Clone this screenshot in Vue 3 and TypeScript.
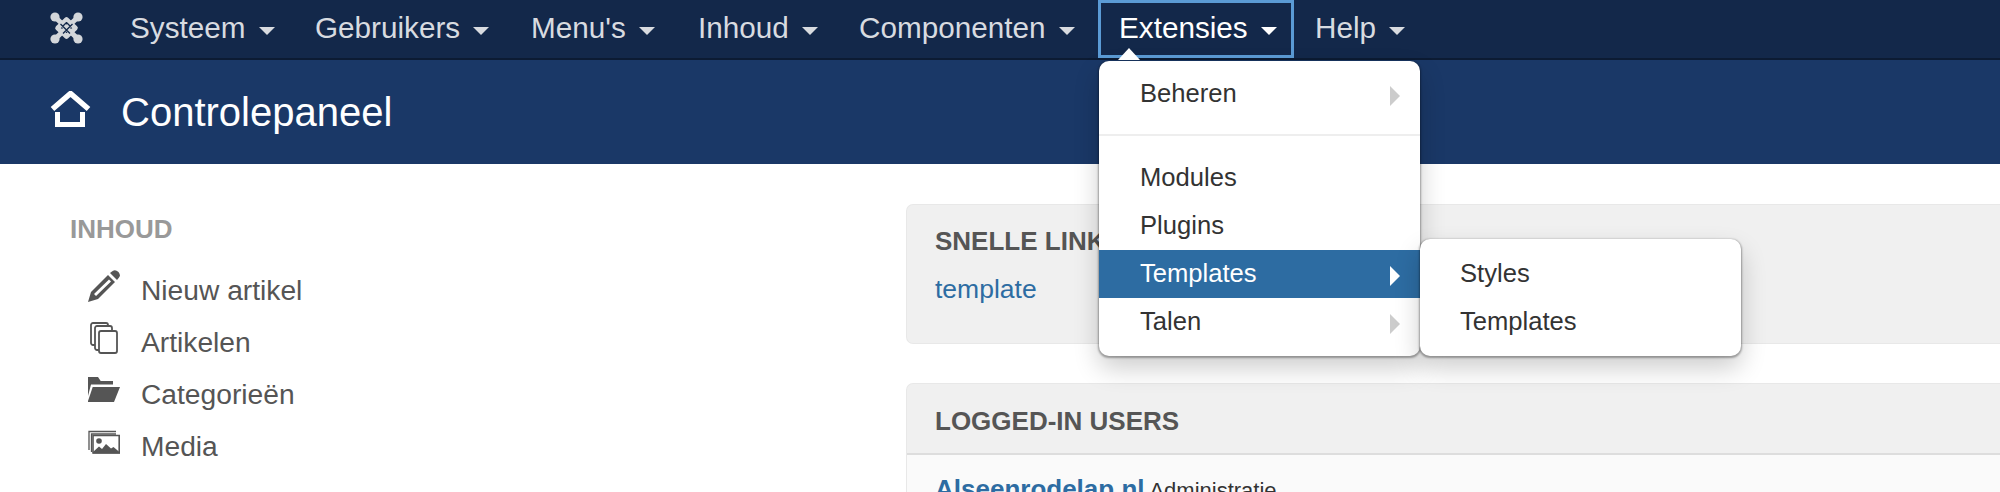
<script setup lang="ts">
const navItems = [
  { label: 'Systeem', width: 185, active: false },
  { label: 'Gebruikers', width: 216, active: false },
  { label: "Menu's", width: 167, active: false },
  { label: 'Inhoud', width: 161, active: false },
  { label: 'Componenten', width: 260, active: false },
  { label: 'Extensies', width: 196, active: true },
  { label: 'Help', width: 100, active: false },
]
</script>

<template>
  <div class="page">
    <nav class="navbar">
      <svg class="logo" viewBox="0 0 33 32" width="33" height="32">
        <g fill="none" stroke="#d3d6da" stroke-linejoin="round">
          <path d="M5 5 L28 27 M28 5 L5 27" stroke-width="5" />
          <path d="M16.5 7.5 L25.5 16 L16.5 24.5 L7.5 16 Z" stroke-width="4.6" />
        </g>
        <path d="M10.5 12 L20 21.5 M22.5 12 L13 21.5 M16.5 10.5 L13 14 M16.5 10.5 L20 14" stroke="#13284a" stroke-width="1.3" fill="none" />
        <circle cx="5" cy="5" r="4.6" fill="#d3d6da" />
        <circle cx="28" cy="5" r="4.6" fill="#d3d6da" />
        <circle cx="5" cy="27" r="4.6" fill="#d3d6da" />
        <circle cx="28" cy="27" r="4.6" fill="#d3d6da" />
      </svg>
      <ul class="nav-list">
        <li
          v-for="item in navItems"
          :key="item.label"
          class="nav-item"
          :class="{ active: item.active }"
          :style="{ width: item.width + 'px' }"
        >
          <span>{{ item.label }}</span><i class="caret"></i>
          <template v-if="item.active">
            <i class="pointer"></i>
            <div class="dropdown">
              <div class="dd-item">Beheren<i class="arrow"></i></div>
              <div class="dd-divider"></div>
              <div class="dd-item">Modules</div>
              <div class="dd-item">Plugins</div>
              <div class="dd-item selected">Templates<i class="arrow"></i>
                <div class="dropdown submenu">
                  <div class="dd-item">Styles</div>
                  <div class="dd-item">Templates</div>
                </div>
              </div>
              <div class="dd-item">Talen<i class="arrow"></i></div>
            </div>
          </template>
        </li>
      </ul>
    </nav>

    <header class="subhead">
      <svg class="home" viewBox="0 0 41 37" width="41" height="37">
        <path d="M2.5 18 L20.5 2.5 L38.5 18" fill="none" stroke="#fff" stroke-width="5.5" />
        <path d="M5 21 H10 V31 H30 V21 H35 V36 H5 Z" fill="#fff" />
      </svg>
      <h1>Controlepaneel</h1>
    </header>

    <main class="content">
      <aside class="sidebar">
        <h2>INHOUD</h2>
        <ul class="side-list">
          <li>
            <svg viewBox="0 0 32 32" width="32" height="32"><path d="M0 32 L3 22 L20 5 L27 12 L10 29 Z M6 24 L8 26 L23 11.5 L21 9.5 Z" fill="#555" fill-rule="evenodd"/><path d="M22 3 L25 0.8 Q27.5 -0.6 30.5 2 Q33 5 31 7.5 L29 10 Z" fill="#555"/></svg>
            Nieuw artikel
          </li>
          <li>
            <svg viewBox="0 0 32 32" width="32" height="32"><g fill="#fff" stroke="#555" stroke-width="1.8"><rect x="3" y="1" width="17" height="22" rx="2"/><rect x="7" y="4" width="17" height="24" rx="2"/><rect x="11" y="9" width="18" height="22" rx="2"/></g></svg>
            Artikelen
          </li>
          <li>
            <svg viewBox="0 0 32 32" width="32" height="32"><path d="M0 3 H10 L12.7 7 H25 V10.5 H3 L0 22 Z" fill="#555"/><path d="M4.7 13 H32 L26 28 H0 V27 Z" fill="#555"/></svg>
            Categorieën
          </li>
          <li>
            <svg viewBox="0 0 32 32" width="32" height="32"><path d="M28 5.5 H1 V24 M28 8 H3.5 V26" stroke="#555" stroke-width="1.3" fill="none"/><path d="M5 9.5 H31.2 V27 H5 Z" fill="#fff" stroke="#555" stroke-width="1.6"/><circle cx="11" cy="15" r="2.8" fill="#555"/><path d="M5 27.5 V26 L11 20.5 L14 23 L18 18 L23 22.5 L25.5 21 L32 26.5 V27.5 Z" fill="#555"/></svg>
            Media
          </li>
        </ul>
      </aside>
      <section class="panels">
        <div class="panel quick">
          <h3>SNELLE LINKS</h3>
          <a>template</a>
        </div>
        <div class="panel users">
          <h3 class="users-head">LOGGED-IN USERS</h3>
          <div class="users-body"><a>Alseenrodelap.nl</a> <span>Administratie</span></div>
        </div>
      </section>
    </main>
  </div>
</template>

<style>
html, body { margin: 0; background: #fff; overflow: hidden; }
</style>

<style scoped>
.page {
  width: 2000px;
  height: 492px;
  overflow: hidden;
  font-family: "Liberation Sans", Arial, sans-serif;
  color: #333;
}
.navbar {
  height: 58px;
  background: #13284a;
  border-bottom: 2px solid #0c1b33;
  display: flex;
  align-items: center;
  padding-left: 50px;
}
.logo { flex: none; margin-right: 25px; margin-top: -2px; }
.nav-list {
  list-style: none;
  margin: 0;
  padding: 0;
  display: flex;
  height: 58px;
}
.nav-item {
  position: relative;
  display: flex;
  align-items: center;
  flex: none;
  box-sizing: border-box;
  height: 58px;
  padding: 0 0 0 22px;
  font-size: 29.7px;
  color: #d8dbe0;
}
.nav-item > span { margin-top: -3px; }
.nav-item.active {
  color: #fff;
  border: 3px solid #5b9bd5;
  margin-left: 1px;
  margin-right: -1px;
  padding: 0 0 0 18px;
}
.caret {
  margin-left: 13px;
  margin-top: 3px;
  border-top: 8px solid currentColor;
  border-left: 8px solid transparent;
  border-right: 8px solid transparent;
}
.pointer {
  position: absolute;
  left: 17px;
  top: 45px;
  border-bottom: 12px solid #fff;
  border-left: 11.5px solid transparent;
  border-right: 11.5px solid transparent;
  z-index: 3;
}
.dropdown {
  position: absolute;
  left: -2px;
  top: 58px;
  width: 321px;
  box-sizing: border-box;
  padding: 9px 0 10px;
  background: #fff;
  border-radius: 10px;
  box-shadow: 0 1px 2px 1px rgba(0,0,0,.32), 0 12px 26px rgba(0,0,0,.2);
  font-size: 25.6px;
  color: #333;
  z-index: 2;
}
.dd-item {
  position: relative;
  height: 48px;
  line-height: 46px;
  padding-left: 41px;
}
.dd-item.selected { background: #2d6ca2; color: #fff; }
.dd-divider {
  height: 2px;
  margin: 16px 0 18px;
  background: #eee;
}
.arrow {
  position: absolute;
  right: 20px;
  top: 16px;
  border-left: 10px solid #ccc;
  border-top: 10px solid transparent;
  border-bottom: 10px solid transparent;
}
.selected > .arrow { border-left-color: #fff; }
.submenu {
  left: 321px;
  top: -11px;
  width: 321px;
  padding: 11px 0 10px;
  color: #333;
  border-radius: 10px;
}
.submenu .dd-item { padding-left: 40px; }

.subhead {
  height: 104px;
  background: #1a3867;
  display: flex;
  align-items: center;
  padding-left: 50px;
}
.home { flex: none; margin-right: 30px; margin-top: -6px; }
.subhead h1 {
  margin: 0;
  color: #fff;
  font-size: 40px;
  font-weight: 400;
}
.content {
  display: flex;
}
.sidebar {
  width: 907px;
  flex: none;
  padding: 0 0 0 70px;
  box-sizing: border-box;
}
.sidebar h2 {
  margin: 0;
  padding-top: 52px;
  font-size: 26px;
  line-height: 26px;
  font-weight: 700;
  color: #999;
}
.side-list {
  list-style: none;
  margin: 22px 0 0;
  padding: 0 0 0 18px;
}
.side-list li {
  display: flex;
  align-items: center;
  height: 52px;
  font-size: 28.2px;
  color: #555;
  gap: 21px;
}
.side-list svg { flex: none; margin-bottom: 8px; }
.panels {
  flex: 1;
  padding-top: 41px;
}
.panel {
  background: #f0f0f0;
  border-radius: 6px 0 0 6px;
  box-shadow: 0 0 0 1px #e8e8e8;
}
.panel h3 {
  margin: 0;
  font-size: 26px;
  font-weight: 700;
  color: #555;
}
.quick {
  height: 138px;
  box-sizing: border-box;
  padding: 21px 0 0 28px;
}
.quick a {
  display: block;
  margin-top: 17px;
  font-size: 26.5px;
  color: #2d6ca2;
}
.users { margin-top: 41px; }
.users-head {
  height: 69px;
  line-height: 74px;
  padding-left: 28px;
  border-bottom: 2px solid #ddd;
}
.users-body {
  background: #fafafa;
  padding: 19px 0 0 28px;
  font-size: 22px;
  height: 60px;
}
.users-body a {
  font-size: 26px;
  font-weight: 700;
  color: #2d6ca2;
}
</style>
